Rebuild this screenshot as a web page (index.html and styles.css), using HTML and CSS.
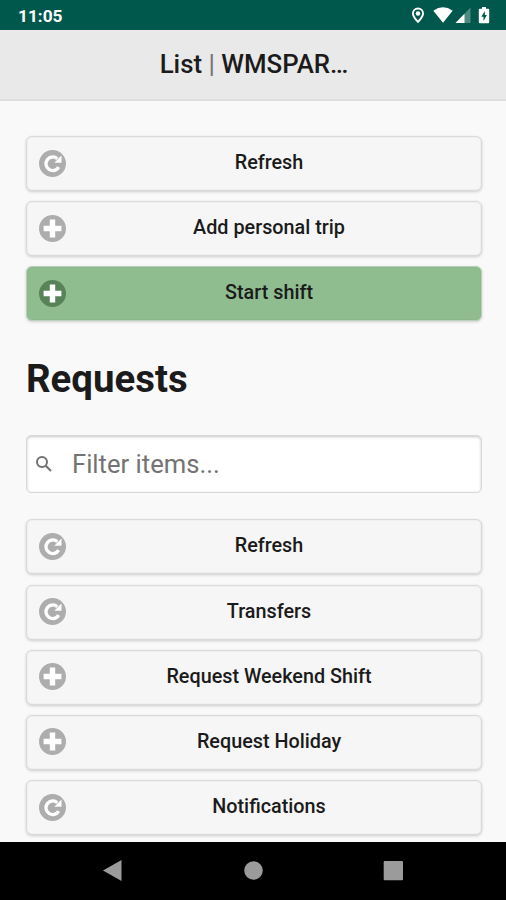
FILE: index.html
```html
<!DOCTYPE html>
<html lang="en">
<head>
<meta charset="utf-8">
<title>List</title>
<link rel="stylesheet" href="styles.css">
</head>
<body>
<svg class="defs" aria-hidden="true">
  <symbol id="refresh" viewBox="-13.5 -13.5 27 27">
    <circle r="13.5" fill="currentColor"/>
    <path d="M4.800 -4.800A6.800 6.800 0 1 0 6.200 3.600" fill="none" stroke="#fff" stroke-width="3.3"/>
    <path d="M9 -8V-.8H1.8Z" fill="#fff"/>
  </symbol>
  <symbol id="plus" viewBox="-13.5 -13.5 27 27">
    <circle r="13.5" fill="currentColor"/>
    <path d="M-2.7 -8.9H2.7V-2.7H8.9V2.7H2.7V8.9H-2.7V2.7H-8.9V-2.7H-2.7Z" fill="#fff"/>
  </symbol>
</svg>
<div class="screen">
  <div class="status">
    <span class="time">11:05</span>
    <svg class="indicators" viewBox="410 0 82 30">
      <path fill="#fff" fill-rule="evenodd" d="M418 7.500a6 6 0 0 0-6 6c0 4.300 6 9.800 6 9.800s6-5.500 6-9.800a6 6 0 0 0-6-6zm0 1.900a4.100 4.100 0 0 1 4.100 4.100c0 2.600-4.100 7-4.100 7s-4.100-4.400-4.100-7a4.100 4.100 0 0 1 4.100-4.100z"/>
      <circle cx="418" cy="13.500" r="2.300" fill="#fff"/>
      <path fill="#fff" d="M433.300 10.700Q443 4 452.700 10.700L443 22.700Z"/>
      <path fill="#4d8b81" d="M470.500 7.500V23H455.500Z"/>
      <path fill="#fff" d="M464.500 13.800V23H455.500Z"/>
      <path fill="#fff" d="M482 7h4v1.800h2.200q1 0 1 1V22q0 1.200-1 1.200h-8.400q-1 0-1-1.200V9.800q0-1 1-1H482z"/>
      <path fill="#00574b" d="M484.800 11L481.300 16.700h2.200V21l3.400-6h-2.100z"/>
    </svg>
  </div>
  <header class="header"><h1>List <span class="bar">|</span> WMSPAR…</h1></header>
  <main class="content">
    <div class="buttons">
      <button class="btn"><svg><use href="#refresh"/></svg>Refresh</button>
      <button class="btn"><svg><use href="#plus"/></svg>Add personal trip</button>
      <button class="btn start"><svg><use href="#plus"/></svg>Start shift</button>
    </div>
    <h2>Requests</h2>
    <div class="search">
      <svg viewBox="0 0 18 18"><circle cx="7" cy="7" r="5" /><path d="M10.800 10.800L16 16"/></svg>
      <span>Filter items...</span>
    </div>
    <div class="buttons">
      <button class="btn"><svg><use href="#refresh"/></svg>Refresh</button>
      <button class="btn"><svg><use href="#refresh"/></svg>Transfers</button>
      <button class="btn"><svg><use href="#plus"/></svg>Request Weekend Shift</button>
      <button class="btn"><svg><use href="#plus"/></svg>Request Holiday</button>
      <button class="btn"><svg><use href="#refresh"/></svg>Notifications</button>
    </div>
  </main>
  <nav class="nav">
    <svg viewBox="0 0 506 58">
      <g fill="#9b9b9b"><path d="M103 28.500L121.500 18V39Z"/><circle cx="253.500" cy="28.500" r="9.300"/><rect x="383.700" y="19" width="19.300" height="19.300" rx="1"/></g>
    </svg>
  </nav>
</div>
</body>
</html>
```
FILE: styles.css
```css
* { box-sizing: border-box; }
body { margin: 0; font-family: Roboto, "Liberation Sans", sans-serif; color: #1b1b1b; }
.defs { display: none; }
.screen { width: 506px; height: 900px; display: flex; flex-direction: column; overflow: hidden; background: #f9f9f9; }
.status { flex: none; height: 30px; padding: 0 14px 0 18px; background: #00574b; color: #fff; display: flex; align-items: center; justify-content: space-between; }
.time { font-size: 17.3px; font-weight: 700; line-height: 30px; padding-top: 2px; }
.indicators { width: 82px; height: 30px; }
.header { flex: none; height: 71px; background: #e9e9e9; border-bottom: 2px solid #dfdfdf; text-align: center; }
h1 { margin: 0; font-size: 25.8px; font-weight: 500; line-height: 69px; padding-left: 2px; }
.bar { color: #777; }
.content { flex: 1; min-height: 0; padding: 35px 24px 0 26px; }
.buttons { display: flex; flex-direction: column; gap: 10.200px; }
.btn { flex: none; display: flex; align-items: center; justify-content: center; position: relative; height: 55px; padding: 0 22px 2px 52px; border: 1px solid #dadada; border-radius: 6px; background: #f6f6f6; box-shadow: inset 0 0 0 1px rgba(0,0,0,.025), 0 1px 3px rgba(0,0,0,.18); font: 500 19.800px Roboto, sans-serif; color: #1b1b1b; }
.btn svg { position: absolute; left: 11.500px; top: 12.500px; width: 27px; height: 27px; color: #adadad; }
.start { background: #90bd90; border-color: #b9d2b9; }
.start svg { color: #588358; }
h2 { margin: 34.600px 0 33.400px; font-size: 38.400px; line-height: 46px; font-weight: 700; }
.search { height: 58px; margin-bottom: 26px; display: flex; align-items: center; border: 1px solid #d8d8d8; border-radius: 5px; background: #fff; box-shadow: inset 0 1px 3px rgba(0,0,0,.22); color: #737373; font-size: 25.600px; }
.search svg { width: 18px; height: 18px; margin-left: 8px; fill: none; stroke: #707070; stroke-width: 2; }
.search span { margin-left: 19px; padding-bottom: 1px; }
.nav { flex: none; height: 58px; background: #000; }
.nav svg { display: block; width: 506px; height: 58px; }
```
